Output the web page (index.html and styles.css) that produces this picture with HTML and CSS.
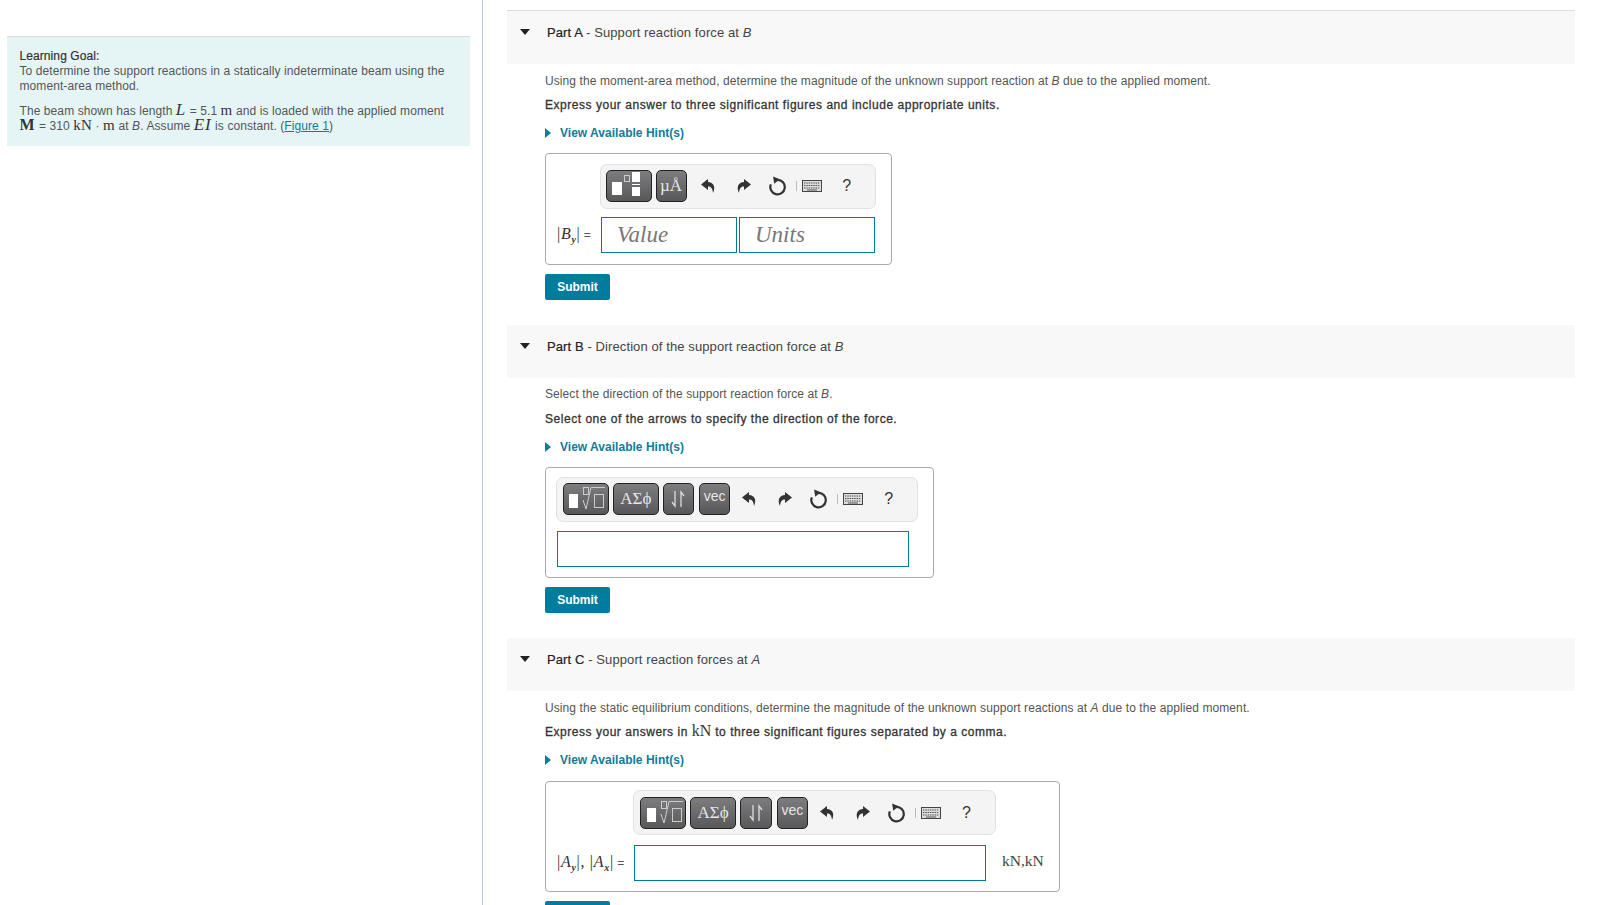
FILE: index.html
```html
<!DOCTYPE html>
<html>
<head>
  <title>Moment-area method</title>
  <meta name="viewport" content="width=device-width, initial-scale=1">
  <link rel="stylesheet" href="styles.css">
</head>
<body>
  <svg class="defs" width="0" height="0">
    <symbol id="undo" viewBox="0 0 16 16"><path d="M7 1 0 6.500l7 5.500V8.500c3 0 4.500 1.500 5 6.500 3-6 .5-11-5-11z"/></symbol>
    <symbol id="redo" viewBox="0 0 16 16"><path d="M9 1l7 5.500L9 12V8.500c-3 0-4.500 1.500-5 6.500-3-6-.5-11 5-11z"/></symbol>
    <symbol id="reload" viewBox="0 0 18 18"><path d="M9.500 3.500a6.500 6.500 0 1 1-6 4" fill="none" stroke="#333" stroke-width="2"/><path d="M5.500 .5l1 6.500 5-4z"/></symbol>
    <symbol id="keys" viewBox="0 0 20 12"><rect x=".5" y=".5" width="19" height="11" fill="#ddd" stroke="#444"/><path d="M2 3h16M2 5.500h16M2 8h16" stroke="#555" stroke-width="1.200" stroke-dasharray="1.500 .8"/><path d="M5 10h10" stroke="#555"/></symbol>
    <symbol id="frac" viewBox="0 0 47 32"><rect x="7" y="12" width="10" height="13" fill="#fff"/><rect x="19.500" y="5.500" width="5" height="6" fill="none" stroke="#ccc"/><rect x="27" y="2" width="8" height="10" fill="#fff"/><rect x="27" y="14" width="8" height="1" fill="#fff"/><rect x="27" y="17" width="8" height="9" fill="#fff"/></symbol>
    <symbol id="radical" viewBox="0 0 47 32"><rect x="7" y="11" width="9" height="14" fill="#fff"/><rect x="21.500" y="4.500" width="5" height="7" fill="none" stroke="#ccc"/><path d="M21 17l3 9 5-21.500h14" fill="none" stroke="#ccc"/><rect x="32.500" y="11.500" width="9" height="13" fill="none" stroke="#ccc"/></symbol>
    <symbol id="updown" viewBox="0 0 14 18"><path d="M4 1v15L1 12M10 17V2l3 4" fill="none" stroke="#ddd" stroke-width="1.300"/></symbol>
  </svg>

  <div class="page">
    <aside class="side">
      <div class="goal">
        <b>Learning Goal:</b><br>
        To determine the support reactions in a statically indeterminate beam using the moment-area method.
        <p>The beam shown has length <span class="m it">L</span> = 5.1 <span class="m">m</span> and is loaded with the applied moment <span class="m bold">M</span> = 310 <span class="m">kN</span> &middot; <span class="m">m</span> at <i>B</i>. Assume <span class="m it">EI</span> is constant. (<a href="#">Figure 1</a>)</p>
      </div>
    </aside>

    <main class="main">
      <section class="part first">
        <header class="part-head"><span class="caret"></span><span><b>Part A</b> - Support reaction force at <i>B</i></span></header>
        <div class="part-body">
          <p class="ask">Using the moment-area method, determine the magnitude of the unknown support reaction at <i>B</i> due to the applied moment.</p>
          <p class="instr">Express your answer to three significant figures and include appropriate units.</p>
          <a class="hint" href="#"><span class="hint-arrow"></span>View Available Hint(s)</a>
          <div class="box box-a">
            <div class="toolbar tb-a">
              <span class="tool wide"><svg width="47" height="32"><use href="#frac"/></svg></span>
              <span class="tool narrow serif">&micro;&Aring;</span>
              <span class="act"><svg width="16" height="16"><use href="#undo"/></svg></span>
              <span class="act"><svg width="16" height="16"><use href="#redo"/></svg></span>
              <span class="act"><svg width="20" height="20"><use href="#reload"/></svg></span>
              <span class="kb"><svg width="20" height="12"><use href="#keys"/></svg></span>
              <span class="help">?</span>
            </div>
            <div class="row">
              <span class="lbl"><span class="m">|<i>B<sub>y</sub></i>|</span> =</span>
              <input class="field" placeholder="Value">
              <input class="field" placeholder="Units">
            </div>
          </div>
          <button class="submit">Submit</button>
        </div>
      </section>

      <section class="part part-b">
        <header class="part-head"><span class="caret"></span><span><b>Part B</b> - Direction of the support reaction force at <i>B</i></span></header>
        <div class="part-body">
          <p class="ask">Select the direction of the support reaction force at <i>B</i>.</p>
          <p class="instr">Select one of the arrows to specify the direction of the force.</p>
          <a class="hint" href="#"><span class="hint-arrow"></span>View Available Hint(s)</a>
          <div class="box box-b">
            <div class="toolbar tb-b">
              <span class="tool wide"><svg width="47" height="32"><use href="#radical"/></svg></span>
              <span class="tool wide serif">&Alpha;&Sigma;&#981;</span>
              <span class="tool narrow"><svg width="14" height="18"><use href="#updown"/></svg></span>
              <span class="tool narrow vec">vec</span>
              <span class="act"><svg width="16" height="16"><use href="#undo"/></svg></span>
              <span class="act"><svg width="16" height="16"><use href="#redo"/></svg></span>
              <span class="act"><svg width="20" height="20"><use href="#reload"/></svg></span>
              <span class="kb"><svg width="20" height="12"><use href="#keys"/></svg></span>
              <span class="help">?</span>
            </div>
            <input class="field long">
          </div>
          <button class="submit">Submit</button>
        </div>
      </section>

      <section class="part">
        <header class="part-head"><span class="caret"></span><span><b>Part C</b> - Support reaction forces at <i>A</i></span></header>
        <div class="part-body">
          <p class="ask">Using the static equilibrium conditions, determine the magnitude of the unknown support reactions at <i>A</i> due to the applied moment.</p>
          <p class="instr">Express your answers in <span class="m plain">kN</span> to three significant figures separated by a comma.</p>
          <a class="hint" href="#"><span class="hint-arrow"></span>View Available Hint(s)</a>
          <div class="box box-c">
            <div class="toolbar tb-c">
              <span class="tool wide"><svg width="47" height="32"><use href="#radical"/></svg></span>
              <span class="tool wide serif">&Alpha;&Sigma;&#981;</span>
              <span class="tool narrow"><svg width="14" height="18"><use href="#updown"/></svg></span>
              <span class="tool narrow vec">vec</span>
              <span class="act"><svg width="16" height="16"><use href="#undo"/></svg></span>
              <span class="act"><svg width="16" height="16"><use href="#redo"/></svg></span>
              <span class="act"><svg width="20" height="20"><use href="#reload"/></svg></span>
              <span class="kb"><svg width="20" height="12"><use href="#keys"/></svg></span>
              <span class="help">?</span>
            </div>
            <div class="row">
              <span class="lbl lbl-c"><span class="m">|<i>A<sub>y</sub></i>|, |<i>A<sub>x</sub></i>|</span> =</span>
              <input class="field long">
              <span class="unit">kN,kN</span>
            </div>
          </div>
          <button class="submit">Submit</button>
        </div>
      </section>
    </main>
  </div>
</body>
</html>
```

FILE: styles.css
```css
html, body { margin: 0; height: 905px; overflow: hidden; background: #fff; }
body { font-family: "Liberation Sans", Arial, sans-serif; font-size: 12px; line-height: 15px; color: #555; letter-spacing: 0.085px; }
.defs { position: absolute; }
.page { display: flex; height: 905px; }

.side { flex: none; width: 463px; border-right: 1px solid #b9ccd9; padding: 36px 12px 0 7px; }
.goal { background: #e5f5f6; border-top: 1px solid #d3e0e4; padding: 12px 12px 12px 12.500px; }
.goal b { font-weight: normal; color: #333; -webkit-text-stroke: 0.2px #333; }
.goal p { margin: 10px 0 0; }
.goal a { color: #0f7c9b; }

.m { font-family: "Liberation Serif", serif; font-size: 15px; line-height: 1px; color: #333; letter-spacing: 0.3px; }
.m.it { font-style: italic; font-size: 17px; letter-spacing: 1px; }
.m.bold { font-weight: bold; font-size: 16px; letter-spacing: 1px; }
.m sub { font-size: 10px; line-height: 0; font-weight: bold; }

.main { flex: 1; padding: 10px 23px 0 24px; min-width: 0; }
.part { margin-bottom: 25px; }
.part.first .part-head { border-top: 1px solid #ddd; }
.part-head { display: flex; height: 53px; background: #f8f8f8; padding: 0 0 0 13px; color: #444; line-height: 44px; font-size: 13px; letter-spacing: 0.1px; }
.part-head b { font-weight: normal; color: #222; -webkit-text-stroke: 0.2px #222; }
.caret { width: 0; height: 0; margin: 18px 17px 0 0; border-left: 5.500px solid transparent; border-right: 5.500px solid transparent; border-top: 6px solid #222; }
.part-body { padding: 10px 0 0 38px; }
.part-b .part-body { padding-top: 9px; }
.ask { margin: 0; }
.instr { margin: 9px 0 0; color: #333; -webkit-text-stroke: 0.3px #333; letter-spacing: 0.53px; }
.part-b .instr { margin-top: 10px; }
.instr .plain { -webkit-text-stroke: 0; font-size: 16px; letter-spacing: 0; }
.hint { display: flex; align-items: center; margin-top: 13px; color: #0f7c9b; font-weight: bold; text-decoration: none; letter-spacing: 0.02px; }
.hint-arrow { width: 0; height: 0; margin: -2px 9px 0 0; border-top: 5.500px solid transparent; border-bottom: 5.500px solid transparent; border-left: 6px solid #0f7c9b; }

.box { margin-top: 13px; border: 1px solid #aaa; border-radius: 4px; box-sizing: border-box; padding: 10px 11px 11px; }
.box-a { width: 347px; height: 112px; margin-top: 12px; }
.box-b { width: 389px; height: 111px; margin-top: 12px; padding-top: 9px; }
.box-c { width: 515px; height: 111px; margin-top: 13px; padding-top: 8px; }

.toolbar { display: flex; align-items: center; height: 45px; box-sizing: border-box; background: #f4f4f4; border: 1px solid #e2e2e2; border-radius: 7px; padding: 0 5px 2px; margin-bottom: 8px; }
.tb-a { width: 276px; margin-left: 43px; }
.tb-b { width: 362px; margin-left: -1px; margin-bottom: 9px; padding-left: 6px; }
.tb-c { width: 363px; margin-left: 76px; margin-bottom: 10px; padding: 0 5px 0 6px; }

.tool { display: flex; align-items: center; justify-content: center; height: 32px; box-sizing: border-box; margin-right: 4px; border: 1px solid #222; border-radius: 5px; background: linear-gradient(#7d7d80, #58585a); color: #e6e6e6; overflow: hidden; }
.tool.wide { width: 47px; }
.tool.narrow { width: 32px; }
.tool svg { flex: none; display: block; }
.serif { font-family: "Liberation Serif", serif; font-size: 17px; letter-spacing: 0; }
.vec { font-size: 14px; align-items: flex-start; padding-top: 5px; margin-left: 1px; letter-spacing: 0; }

.act { width: 34px; flex: none; display: flex; justify-content: center; fill: #333; }
.act svg { display: block; }
.tool + .act { margin-left: 1px; }
.vec + .act { margin-left: -1px; }
.kb { display: flex; align-items: center; margin-left: 2px; padding-left: 5px; width: 22px; flex: none; height: 10px; border-left: 1px solid #bbb; }
.help { width: 48px; text-align: center; font-size: 16px; color: #333; letter-spacing: 0; }

.row { display: flex; align-items: center; }
.lbl { width: 44px; flex: none; white-space: nowrap; }
.lbl .m { font-size: 16px; letter-spacing: 0.7px; }
.lbl-c { width: 77px; }
.field { width: 136px; height: 36px; box-sizing: border-box; margin: 0 2px 0 0; border: 1px solid #007a9c; background: #fff; padding: 0 15px; font: italic 23px "Liberation Serif", serif; color: #777; border-radius: 0; }
.field::placeholder { color: #777; }
.long { width: 352px; margin: 0; flex: none; }
.unit { margin: -6px 0 0 16px; font-family: "Liberation Serif", serif; font-size: 15.500px; letter-spacing: 0; color: #444; }

.submit { display: block; margin: 9px 0 0; width: 65px; height: 26px; border: none; border-radius: 2px; background: #007c9e; color: #fff; font: bold 12px "Liberation Sans", Arial, sans-serif; padding: 0; }
```
